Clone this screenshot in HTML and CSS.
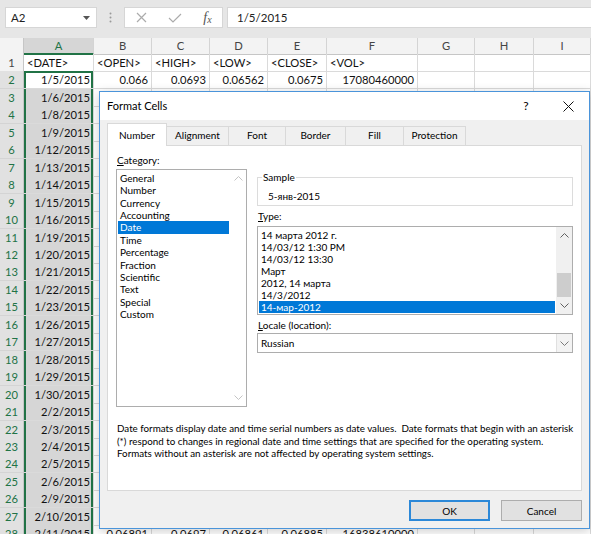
FILE: index.html
```html
<!DOCTYPE html>
<html lang="en">
<head>
    <meta charset="UTF-8">
    <title>Format Cells</title>

    <link rel="stylesheet" href="styles.css">
</head>
<body>

<div class="excel">

    <div class="formula-bar">
        <div class="name-box">
            <span>A2</span>
            <svg width="7" height="4" viewBox="0 0 7 4"><path d="M0 0h7L3.5 4z" fill="#555"/></svg>
        </div>
        <div class="formula-bar_grip">
            <svg width="3" height="11" viewBox="0 0 3 11"><circle cx="1.5" cy="1.5" r="1" fill="#9a9a9a"/><circle cx="1.5" cy="5.5" r="1" fill="#9a9a9a"/><circle cx="1.5" cy="9.5" r="1" fill="#9a9a9a"/></svg>
        </div>
        <div class="formula-bar_buttons">
            <span class="formula-bar_button"><svg width="11" height="11" viewBox="0 0 11 11"><path d="M1 1l9 9M10 1l-9 9" stroke="#ababab" stroke-width="1.2" fill="none"/></svg></span>
            <span class="formula-bar_button"><svg width="14" height="10" viewBox="0 0 14 10"><path d="M1 5l4 4 8-8" stroke="#ababab" stroke-width="1.2" fill="none"/></svg></span>
            <span class="formula-bar_button fx">f<span class="fx_sub">x</span></span>
        </div>
        <div class="formula-bar_input">1/5/2015</div>
    </div>

    <div class="sheet">
        <div class="sheet-row sheet-row_head">
            <div class="corner"></div>
            <div class="col-head col-head_active">A</div>
            <div class="col-head">B</div>
            <div class="col-head">C</div>
            <div class="col-head">D</div>
            <div class="col-head">E</div>
            <div class="col-head">F</div>
            <div class="col-head">G</div>
            <div class="col-head">H</div>
            <div class="col-head">I</div>
        </div>
        <div class="sheet-row">
            <div class="row-head">1</div>
            <div class="cell">&lt;DATE&gt;</div>
            <div class="cell">&lt;OPEN&gt;</div>
            <div class="cell">&lt;HIGH&gt;</div>
            <div class="cell">&lt;LOW&gt;</div>
            <div class="cell">&lt;CLOSE&gt;</div>
            <div class="cell">&lt;VOL&gt;</div>
            <div class="cell"></div>
            <div class="cell"></div>
            <div class="cell"></div>
        </div>
        <div class="sheet-row">
            <div class="row-head row-head_active">2</div>
            <div class="cell cell_num cell_active">1/5/2015</div>
            <div class="cell cell_num">0.066</div>
            <div class="cell cell_num">0.0693</div>
            <div class="cell cell_num">0.06562</div>
            <div class="cell cell_num">0.0675</div>
            <div class="cell cell_num">17080460000</div>
            <div class="cell"></div>
            <div class="cell"></div>
            <div class="cell"></div>
        </div>
        <div class="sheet-row"><div class="row-head row-head_active">3</div><div class="cell cell_num cell_sel">1/6/2015</div><div class="cell"></div><div class="cell"></div><div class="cell"></div><div class="cell"></div><div class="cell"></div><div class="cell"></div><div class="cell"></div><div class="cell"></div></div>
        <div class="sheet-row"><div class="row-head row-head_active">4</div><div class="cell cell_num cell_sel">1/8/2015</div><div class="cell"></div><div class="cell"></div><div class="cell"></div><div class="cell"></div><div class="cell"></div><div class="cell"></div><div class="cell"></div><div class="cell"></div></div>
        <div class="sheet-row"><div class="row-head row-head_active">5</div><div class="cell cell_num cell_sel">1/9/2015</div><div class="cell"></div><div class="cell"></div><div class="cell"></div><div class="cell"></div><div class="cell"></div><div class="cell"></div><div class="cell"></div><div class="cell"></div></div>
        <div class="sheet-row"><div class="row-head row-head_active">6</div><div class="cell cell_num cell_sel">1/12/2015</div><div class="cell"></div><div class="cell"></div><div class="cell"></div><div class="cell"></div><div class="cell"></div><div class="cell"></div><div class="cell"></div><div class="cell"></div></div>
        <div class="sheet-row"><div class="row-head row-head_active">7</div><div class="cell cell_num cell_sel">1/13/2015</div><div class="cell"></div><div class="cell"></div><div class="cell"></div><div class="cell"></div><div class="cell"></div><div class="cell"></div><div class="cell"></div><div class="cell"></div></div>
        <div class="sheet-row"><div class="row-head row-head_active">8</div><div class="cell cell_num cell_sel">1/14/2015</div><div class="cell"></div><div class="cell"></div><div class="cell"></div><div class="cell"></div><div class="cell"></div><div class="cell"></div><div class="cell"></div><div class="cell"></div></div>
        <div class="sheet-row"><div class="row-head row-head_active">9</div><div class="cell cell_num cell_sel">1/15/2015</div><div class="cell"></div><div class="cell"></div><div class="cell"></div><div class="cell"></div><div class="cell"></div><div class="cell"></div><div class="cell"></div><div class="cell"></div></div>
        <div class="sheet-row"><div class="row-head row-head_active">10</div><div class="cell cell_num cell_sel">1/16/2015</div><div class="cell"></div><div class="cell"></div><div class="cell"></div><div class="cell"></div><div class="cell"></div><div class="cell"></div><div class="cell"></div><div class="cell"></div></div>
        <div class="sheet-row"><div class="row-head row-head_active">11</div><div class="cell cell_num cell_sel">1/19/2015</div><div class="cell"></div><div class="cell"></div><div class="cell"></div><div class="cell"></div><div class="cell"></div><div class="cell"></div><div class="cell"></div><div class="cell"></div></div>
        <div class="sheet-row"><div class="row-head row-head_active">12</div><div class="cell cell_num cell_sel">1/20/2015</div><div class="cell"></div><div class="cell"></div><div class="cell"></div><div class="cell"></div><div class="cell"></div><div class="cell"></div><div class="cell"></div><div class="cell"></div></div>
        <div class="sheet-row"><div class="row-head row-head_active">13</div><div class="cell cell_num cell_sel">1/21/2015</div><div class="cell"></div><div class="cell"></div><div class="cell"></div><div class="cell"></div><div class="cell"></div><div class="cell"></div><div class="cell"></div><div class="cell"></div></div>
        <div class="sheet-row"><div class="row-head row-head_active">14</div><div class="cell cell_num cell_sel">1/22/2015</div><div class="cell"></div><div class="cell"></div><div class="cell"></div><div class="cell"></div><div class="cell"></div><div class="cell"></div><div class="cell"></div><div class="cell"></div></div>
        <div class="sheet-row"><div class="row-head row-head_active">15</div><div class="cell cell_num cell_sel">1/23/2015</div><div class="cell"></div><div class="cell"></div><div class="cell"></div><div class="cell"></div><div class="cell"></div><div class="cell"></div><div class="cell"></div><div class="cell"></div></div>
        <div class="sheet-row"><div class="row-head row-head_active">16</div><div class="cell cell_num cell_sel">1/26/2015</div><div class="cell"></div><div class="cell"></div><div class="cell"></div><div class="cell"></div><div class="cell"></div><div class="cell"></div><div class="cell"></div><div class="cell"></div></div>
        <div class="sheet-row"><div class="row-head row-head_active">17</div><div class="cell cell_num cell_sel">1/27/2015</div><div class="cell"></div><div class="cell"></div><div class="cell"></div><div class="cell"></div><div class="cell"></div><div class="cell"></div><div class="cell"></div><div class="cell"></div></div>
        <div class="sheet-row"><div class="row-head row-head_active">18</div><div class="cell cell_num cell_sel">1/28/2015</div><div class="cell"></div><div class="cell"></div><div class="cell"></div><div class="cell"></div><div class="cell"></div><div class="cell"></div><div class="cell"></div><div class="cell"></div></div>
        <div class="sheet-row"><div class="row-head row-head_active">19</div><div class="cell cell_num cell_sel">1/29/2015</div><div class="cell"></div><div class="cell"></div><div class="cell"></div><div class="cell"></div><div class="cell"></div><div class="cell"></div><div class="cell"></div><div class="cell"></div></div>
        <div class="sheet-row"><div class="row-head row-head_active">20</div><div class="cell cell_num cell_sel">1/30/2015</div><div class="cell"></div><div class="cell"></div><div class="cell"></div><div class="cell"></div><div class="cell"></div><div class="cell"></div><div class="cell"></div><div class="cell"></div></div>
        <div class="sheet-row"><div class="row-head row-head_active">21</div><div class="cell cell_num cell_sel">2/2/2015</div><div class="cell"></div><div class="cell"></div><div class="cell"></div><div class="cell"></div><div class="cell"></div><div class="cell"></div><div class="cell"></div><div class="cell"></div></div>
        <div class="sheet-row"><div class="row-head row-head_active">22</div><div class="cell cell_num cell_sel">2/3/2015</div><div class="cell"></div><div class="cell"></div><div class="cell"></div><div class="cell"></div><div class="cell"></div><div class="cell"></div><div class="cell"></div><div class="cell"></div></div>
        <div class="sheet-row"><div class="row-head row-head_active">23</div><div class="cell cell_num cell_sel">2/4/2015</div><div class="cell"></div><div class="cell"></div><div class="cell"></div><div class="cell"></div><div class="cell"></div><div class="cell"></div><div class="cell"></div><div class="cell"></div></div>
        <div class="sheet-row"><div class="row-head row-head_active">24</div><div class="cell cell_num cell_sel">2/5/2015</div><div class="cell"></div><div class="cell"></div><div class="cell"></div><div class="cell"></div><div class="cell"></div><div class="cell"></div><div class="cell"></div><div class="cell"></div></div>
        <div class="sheet-row"><div class="row-head row-head_active">25</div><div class="cell cell_num cell_sel">2/6/2015</div><div class="cell"></div><div class="cell"></div><div class="cell"></div><div class="cell"></div><div class="cell"></div><div class="cell"></div><div class="cell"></div><div class="cell"></div></div>
        <div class="sheet-row"><div class="row-head row-head_active">26</div><div class="cell cell_num cell_sel">2/9/2015</div><div class="cell"></div><div class="cell"></div><div class="cell"></div><div class="cell"></div><div class="cell"></div><div class="cell"></div><div class="cell"></div><div class="cell"></div></div>
        <div class="sheet-row"><div class="row-head row-head_active">27</div><div class="cell cell_num cell_sel">2/10/2015</div><div class="cell"></div><div class="cell"></div><div class="cell"></div><div class="cell"></div><div class="cell"></div><div class="cell"></div><div class="cell"></div><div class="cell"></div></div>
        <div class="sheet-row">
            <div class="row-head row-head_active">28</div>
            <div class="cell cell_num cell_sel">2/11/2015</div>
            <div class="cell cell_num">0.06891</div>
            <div class="cell cell_num">0.0697</div>
            <div class="cell cell_num">0.06861</div>
            <div class="cell cell_num">0.06885</div>
            <div class="cell cell_num">16838610000</div>
            <div class="cell"></div>
            <div class="cell"></div>
            <div class="cell"></div>
        </div>
    </div>

    <div class="dialog">
        <div class="dialog_title">
            <span class="dialog_title-text">Format Cells</span>
            <span class="dialog_title-button">?</span>
            <span class="dialog_title-button">
                <svg width="11" height="11" viewBox="0 0 11 11"><path d="M0.5 0.5l10 10M10.5 0.5l-10 10" stroke="#111" stroke-width="1" fill="none"/></svg>
            </span>
        </div>

        <div class="dialog_body">
            <div class="tabs">
                <div class="tab tab_active" style="width: 60px">Number</div>
                <div class="tab" style="width: 63px">Alignment</div>
                <div class="tab" style="width: 58px">Font</div>
                <div class="tab" style="width: 61px">Border</div>
                <div class="tab" style="width: 59px">Fill</div>
                <div class="tab" style="width: 63px">Protection</div>
            </div>

            <div class="tab-panel">
                <div class="panel-columns">
                    <div class="category">
                        <div class="label"><u>C</u>ategory:</div>
                        <div class="listbox category_list">
                            <ul class="listbox_items">
                                <li class="listbox_item">General</li>
                                <li class="listbox_item">Number</li>
                                <li class="listbox_item">Currency</li>
                                <li class="listbox_item">Accounting</li>
                                <li class="listbox_item listbox_item_selected">Date</li>
                                <li class="listbox_item">Time</li>
                                <li class="listbox_item">Percentage</li>
                                <li class="listbox_item">Fraction</li>
                                <li class="listbox_item">Scientific</li>
                                <li class="listbox_item">Text</li>
                                <li class="listbox_item">Special</li>
                                <li class="listbox_item">Custom</li>
                            </ul>
                            <div class="scrollbar scrollbar_disabled">
                                <div class="scrollbar_button"><svg width="9" height="5" viewBox="0 0 9 5"><path d="M0.5 4.5l4-4 4 4" stroke="#c4c4c4" fill="none"/></svg></div>
                                <div class="scrollbar_track"></div>
                                <div class="scrollbar_button"><svg width="9" height="5" viewBox="0 0 9 5"><path d="M0.5 0.5l4 4 4-4" stroke="#c4c4c4" fill="none"/></svg></div>
                            </div>
                        </div>
                    </div>

                    <div class="details">
                        <fieldset class="sample">
                            <legend class="sample_legend">Sample</legend>
                            <div class="sample_value">5-янв-2015</div>
                        </fieldset>

                        <div class="label label_spaced"><u>T</u>ype:</div>
                        <div class="listbox type_list">
                            <ul class="listbox_items">
                                <li class="listbox_item">14 марта 2012 г.</li>
                                <li class="listbox_item">14/03/12 1:30 PM</li>
                                <li class="listbox_item">14/03/12 13:30</li>
                                <li class="listbox_item">Март</li>
                                <li class="listbox_item">2012, 14 марта</li>
                                <li class="listbox_item">14/3/2012</li>
                                <li class="listbox_item listbox_item_selected">14-мар-2012</li>
                            </ul>
                            <div class="scrollbar">
                                <div class="scrollbar_button"><svg width="9" height="5" viewBox="0 0 9 5"><path d="M0.5 4.5l4-4 4 4" stroke="#606060" fill="none"/></svg></div>
                                <div class="scrollbar_track"><div class="scrollbar_thumb"></div></div>
                                <div class="scrollbar_button"><svg width="9" height="5" viewBox="0 0 9 5"><path d="M0.5 0.5l4 4 4-4" stroke="#606060" fill="none"/></svg></div>
                            </div>
                        </div>

                        <div class="label label_spaced"><u>L</u>ocale (location):</div>
                        <div class="combo">
                            <span class="combo_value">Russian</span>
                            <span class="combo_button"><svg width="9" height="5" viewBox="0 0 9 5"><path d="M0.5 0.5l4 4 4-4" stroke="#7a7a7a" fill="none"/></svg></span>
                        </div>
                    </div>
                </div>

                <p class="hint">
                    Date formats display date and time serial numbers as date values.&nbsp; Date formats that begin with an asterisk<br>
                    (*) respond to changes in regional date and time settings that are specified for the operating system.<br>
                    Formats without an asterisk are not affected by operating system settings.
                </p>
            </div>

            <div class="dialog_buttons">
                <button class="button button_default">OK</button>
                <button class="button">Cancel</button>
            </div>
        </div>
    </div>

</div>

</body>
</html>
```

FILE: styles.css
```css
* {
    box-sizing: border-box;
}

body {
    margin: 0;
    font-family: Lato, "Liberation Sans", sans-serif;
    color: #000;
    background: #fff;
}

.excel {
    position: relative;
    width: 591px;
    height: 534px;
    overflow: hidden;
}

/* formula bar */

.formula-bar {
    display: flex;
    align-items: center;
    height: 38px;
    padding: 7px 0 10px 5px;
    background: #e6e6e6;
    font-size: 11.5px;
    color: #222;
}

.name-box {
    display: flex;
    align-items: center;
    justify-content: space-between;
    width: 92px;
    height: 21px;
    padding: 0 6px 0 5px;
    background: #fff;
    border: 1px solid #d6d6d6;
}

.formula-bar_grip {
    display: flex;
    justify-content: center;
    width: 27px;
}

.formula-bar_buttons {
    display: grid;
    grid-template-columns: 33px 33px 33px;
    align-items: center;
    width: 99px;
    height: 21px;
    background: #fff;
    border: 1px solid #d6d6d6;
}

.formula-bar_button {
    display: flex;
    align-items: center;
    justify-content: center;
}

.fx {
    font-family: "Liberation Serif", serif;
    font-style: italic;
    font-size: 14px;
    color: #555;
}

.fx_sub {
    font-size: 10px;
    margin-top: 4px;
}

.formula-bar_input {
    flex: 1;
    height: 21px;
    margin-left: 4px;
    padding-left: 9px;
    line-height: 19px;
    background: #fff;
    border: 1px solid #d6d6d6;
    border-right: 0;
}

/* sheet */

.sheet-row {
    display: grid;
    grid-template-columns: 24px 70px 58px 58px 58px 59px 91px 57px 59px 57px;
    height: 17.46px;
    font-size: 11.2px;
    line-height: 17px;
    color: #111;
}

.sheet-row_head {
    height: 16px;
    line-height: 15px;
}

.corner {
    background: #f3f3f3;
    border-right: 1px solid #c6c6c6;
    border-bottom: 1px solid #c6c6c6;
}

.col-head {
    text-align: center;
    color: #444;
    background: #f3f3f3;
    border-right: 1px solid #d4d4d4;
    border-bottom: 1px solid #c6c6c6;
}

.col-head_active {
    color: #217346;
    background: #d6d6d6;
    border-bottom: 2px solid #217346;
}

.row-head {
    text-align: center;
    color: #444;
    background: #f3f3f3;
    border-right: 1px solid #c6c6c6;
    border-bottom: 1px solid #d4d4d4;
}

.row-head_active {
    color: #217346;
    background: #e1e1e1;
}

.cell {
    padding: 0 3px;
    white-space: nowrap;
    border-right: 1px solid #dadada;
    border-bottom: 1px solid #dadada;
}

.cell_num {
    text-align: right;
}

.cell_sel {
    background: #d6d6d6;
    box-shadow: inset 2px 0 #217346, inset -2px 0 #217346;
}

.cell_active {
    background: #fff;
    box-shadow: inset 2px 0 #217346, inset -2px 0 #217346, inset 0 2px #217346;
}

/* dialog */

.dialog {
    position: absolute;
    left: 99px;
    top: 91px;
    width: 491px;
    height: 438px;
    background: #f0f0f0;
    border: 1px solid #4a94da;
    box-shadow: 0 2px 10px rgba(0, 0, 0, 0.2);
    font-size: 10px;
    line-height: 12px;
}

.dialog_title {
    display: flex;
    align-items: center;
    height: 28px;
    padding-left: 7px;
    background: #fff;
    font-size: 11px;
}

.dialog_title-text {
    flex: 1;
}

.dialog_title-button {
    display: flex;
    align-items: center;
    justify-content: center;
    width: 42px;
    height: 28px;
    font-size: 12px;
}

.dialog_body {
    padding: 0 7px;
}

.tabs {
    display: flex;
    align-items: flex-end;
    height: 25px;
}

.tab {
    height: 19px;
    margin-right: -1px;
    line-height: 17px;
    text-align: center;
    background: #f0f0f0;
    border: 1px solid #d9d9d9;
    border-bottom: 0;
}

.tab_active {
    position: relative;
    z-index: 1;
    height: 23px;
    margin-bottom: -1px;
    padding-top: 3px;
    background: #fff;
}

.tab-panel {
    height: 346px;
    padding: 8px 8px 0 8px;
    background: #fff;
    border: 1px solid #d9d9d9;
}

.panel-columns {
    display: flex;
    gap: 10px;
}

.category {
    width: 131px;
}

.label {
    height: 12px;
    padding-left: 1px;
}

.label_spaced {
    margin-top: 4px;
}

.listbox {
    display: flex;
    background: #fff;
    border: 1px solid #adadad;
}

.category_list {
    height: 238px;
    margin-top: 3px;
}

.type_list {
    height: 89px;
    margin-top: 4px;
}

.listbox_items {
    flex: 1;
    margin: 0;
    padding: 2px 1px;
    list-style: none;
}

.listbox_item {
    padding-left: 2px;
    line-height: 12px;
    white-space: nowrap;
}

.category_list .listbox_item {
    line-height: 12.36px;
}

.listbox_item_selected {
    color: #fff;
    background: #0078d7;
}

.scrollbar {
    display: flex;
    flex-direction: column;
    width: 16px;
    background: #f0f0f0;
}

.scrollbar_disabled {
    background: #fff;
}

.scrollbar_button {
    display: flex;
    align-items: center;
    justify-content: center;
    height: 17px;
}

.scrollbar_track {
    flex: 1;
    display: flex;
    flex-direction: column;
    justify-content: flex-end;
    padding: 0 1px;
}

.scrollbar_thumb {
    height: 24px;
    background: #cdcdcd;
}

.details {
    width: 316px;
    padding-top: 17px;
}

.sample {
    margin: 0;
    padding: 7px 0 3px 4px;
    border: 1px solid #dcdcdc;
}

.sample_legend {
    padding: 0 1px;
    line-height: 12px;
}

.sample_value {
    padding-left: 6px;
}

.combo {
    display: flex;
    height: 20px;
    margin-top: 2px;
    background: #fff;
    border: 1px solid #adadad;
}

.combo_value {
    flex: 1;
    padding-left: 3px;
    line-height: 18px;
}

.combo_button {
    display: flex;
    align-items: center;
    justify-content: center;
    width: 16px;
    background: #f3f3f3;
    border-left: 1px solid #e0e0e0;
}

.hint {
    margin: 15px 0 0;
    padding-left: 1px;
    font-size: 9.8px;
    line-height: 12.5px;
    white-space: nowrap;
}

.dialog_buttons {
    display: flex;
    justify-content: flex-end;
    gap: 11px;
    margin-top: 9px;
}

.button {
    width: 81px;
    height: 21px;
    padding: 0;
    font: inherit;
    color: #000;
    background: #e1e1e1;
    border: 1px solid #adadad;
}

.button_default {
    border: 2px solid #2b88d8;
}
```
